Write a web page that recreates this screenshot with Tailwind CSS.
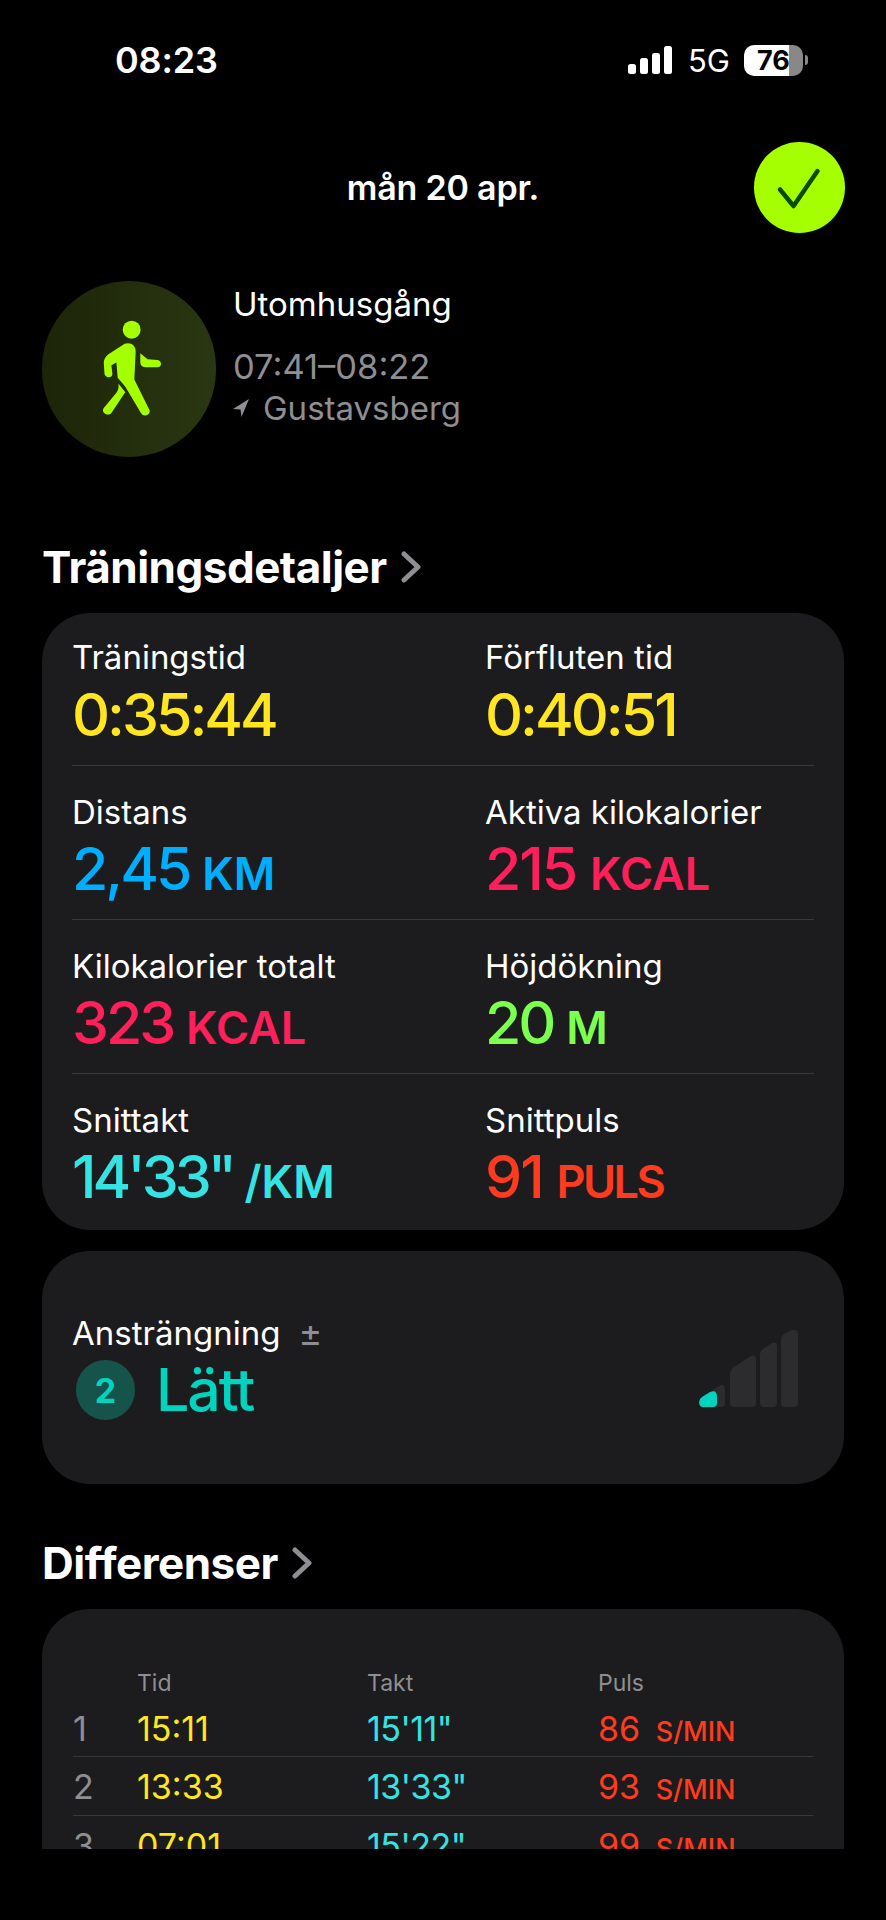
<!DOCTYPE html>
<html lang="sv">
<head>
  <meta charset="UTF-8">
  <meta name="viewport" content="width=device-width, initial-scale=1.0">
  <title>Träning</title>
  <script src="https://cdn.jsdelivr.net/npm/@tailwindcss/browser@4"></script>
</head>
<body class="bg-black text-white font-['Inter','Noto_Sans',sans-serif]">
<div class="w-[886px] h-[1920px] overflow-hidden">

  <!-- Status bar -->
  <div class="h-[120px] flex items-center pl-[115px] pr-[78px]">
    <span class="text-[36px] font-semibold tracking-[-0.2px]">08:23</span>
    <div class="ml-auto flex items-center">
      <svg width="44" height="28" viewBox="0 0 44 28" fill="#fff">
        <rect x="0" y="18" width="8" height="10" rx="2.5"/>
        <rect x="12" y="12" width="8" height="16" rx="2.5"/>
        <rect x="24" y="7" width="8" height="21" rx="2.5"/>
        <rect x="36" y="0" width="8" height="28" rx="2.5"/>
      </svg>
      <span class="ml-[16px] text-[31px] font-normal leading-none">5G</span>
      <div class="ml-[14px] w-[59px] h-[31px] rounded-[10px] bg-[linear-gradient(90deg,#fff_76%,#888_76%)] flex items-center justify-center text-black text-[27px] font-bold leading-none">76</div>
      <div class="ml-[2px] w-[3px] h-[10px] rounded-r-full bg-[#888]"></div>
    </div>
  </div>

  <!-- Date and close -->
  <div class="mt-[22px] pr-[41px] grid grid-cols-[1fr_auto_1fr] items-center">
    <div></div>
    <div class="text-[34px] font-semibold tracking-[-0.2px] pl-[41px]">mån 20 apr.</div>
    <div class="flex justify-end">
      <div class="w-[91px] h-[91px] rounded-full bg-[#a6ff00] flex items-center justify-center">
        <svg width="91" height="91" viewBox="0 0 91 91" fill="none" stroke="#0b4a00" stroke-width="4.5" stroke-linecap="round" stroke-linejoin="round">
          <path d="M26 47.5 39.5 64 63.5 29"/>
        </svg>
      </div>
    </div>
  </div>

  <!-- Workout -->
  <div class="mt-[48px] pl-[42px] flex">
    <div class="w-[174px] h-[176px] rounded-full bg-[linear-gradient(90deg,#1c2508,#2a3712)]">
      <svg width="174" height="176" viewBox="34 37 524 524" preserveAspectRatio="none" fill="#a4ff00">
        <circle cx="304" cy="182" r="27"/>
        <path d="M283 224C300 218 318 228 316 250L312 330 358 422C362 436 340 444 332 430L285 352 262 325 258 280 243 288 246 314C246 328 222 326 222 312L220 280C220 270 226 262 234 255Z"/>
        <path d="M264 342 285 368 280 375 243 430C232 442 210 428 220 415L258 370C264 362 266 350 264 342Z"/>
        <path d="M330 252 352 270 382 272C396 274 396 294 382 294L345 294C335 294 330 288 330 280Z"/>
      </svg>
    </div>
    <div class="ml-[17px]">
      <div class="h-[46px] leading-[46px] text-[33px]">Utomhusgång</div>
      <div class="mt-[20px] h-[40px] leading-[40px] text-[34.5px] text-[#8e8e93]">07:41–08:22</div>
      <div class="mt-[1px] h-[40px] leading-[40px] text-[33px] text-[#8e8e93] flex items-center">
        <svg width="16" height="18" viewBox="0 0 16 18" fill="#8e8e93" class="mr-[14px]"><path d="M16 0 0 10 7.5 10.5 8.5 18Z"/></svg>
        Gustavsberg
      </div>
    </div>
  </div>

  <!-- Träningsdetaljer -->
  <div class="mt-[85px] pl-[42px] h-[50px] flex items-center">
    <h2 class="text-[44px] font-bold tracking-[-0.5px]">Träningsdetaljer</h2>
    <svg width="22" height="32" viewBox="0 0 22 32" fill="none" stroke="#8e8e93" stroke-width="5" stroke-linecap="round" stroke-linejoin="round" class="ml-[13px]"><path d="M4 3 18 16 4 29"/></svg>
  </div>

  <div class="mt-[21px] mx-[42px] h-[617px] rounded-[48px] bg-[#1c1c1e] px-[30px]">
    <div class="h-[153px] border-b border-[#38383a] grid grid-cols-[413px_1fr]">
      <div class="pt-[26px]">
        <div class="h-[36px] leading-[36px] text-[33px]">Träningstid</div>
        <div class="mt-[10px] h-[60px] leading-[60px] text-[59px] font-medium tracking-[-3px] text-[#ffe620]">0:35:44</div>
      </div>
      <div class="pt-[26px]">
        <div class="h-[36px] leading-[36px] text-[33px]">Förfluten tid</div>
        <div class="mt-[10px] h-[60px] leading-[60px] text-[59px] font-medium tracking-[-3px] text-[#ffe620]">0:40:51</div>
      </div>
    </div>
    <div class="h-[154px] border-b border-[#38383a] grid grid-cols-[413px_1fr]">
      <div class="pt-[28px]">
        <div class="h-[36px] leading-[36px] text-[33px]">Distans</div>
        <div class="mt-[9px] h-[60px] leading-[60px] text-[59px] font-medium tracking-[-3px] text-[#00aeff]">2,45 <span class="text-[45px] font-semibold tracking-normal">KM</span></div>
      </div>
      <div class="pt-[28px]">
        <div class="h-[36px] leading-[36px] text-[33px]">Aktiva kilokalorier</div>
        <div class="mt-[9px] h-[60px] leading-[60px] text-[59px] font-medium tracking-[-2px] text-[#ff1f5a]">215 <span class="text-[45px] font-semibold tracking-normal">KCAL</span></div>
      </div>
    </div>
    <div class="h-[154px] border-b border-[#38383a] grid grid-cols-[413px_1fr]">
      <div class="pt-[28px]">
        <div class="h-[36px] leading-[36px] text-[33px]">Kilokalorier totalt</div>
        <div class="mt-[9px] h-[60px] leading-[60px] text-[59px] font-medium tracking-[-3px] text-[#ff1f5a]">323 <span class="text-[45px] font-semibold tracking-normal">KCAL</span></div>
      </div>
      <div class="pt-[28px]">
        <div class="h-[36px] leading-[36px] text-[33px]">Höjdökning</div>
        <div class="mt-[9px] h-[60px] leading-[60px] text-[59px] font-medium tracking-[-3px] text-[#7dff50]">20 <span class="text-[45px] font-semibold tracking-normal">M</span></div>
      </div>
    </div>
    <div class="grid grid-cols-[413px_1fr]">
      <div class="pt-[28px]">
        <div class="h-[36px] leading-[36px] text-[33px]">Snittakt</div>
        <div class="mt-[9px] h-[60px] leading-[60px] text-[59px] font-medium tracking-[-4px] text-[#35e3e3]">14'33" <span class="text-[45px] font-semibold tracking-normal">/KM</span></div>
      </div>
      <div class="pt-[28px]">
        <div class="h-[36px] leading-[36px] text-[33px]">Snittpuls</div>
        <div class="mt-[9px] h-[60px] leading-[60px] text-[59px] font-medium tracking-[-2px] text-[#ff3b1f]">91 <span class="text-[45px] font-semibold tracking-[-2.5px]">PULS</span></div>
      </div>
    </div>
  </div>

  <!-- Ansträngning -->
  <div class="mt-[21px] mx-[42px] h-[233px] rounded-[48px] bg-[#1c1c1e] px-[30px] pt-[64px] flex justify-between">
    <div>
      <div class="h-[36px] leading-[36px] text-[33px] flex items-center">Ansträngning <span class="ml-[18px] text-[36px] leading-none text-[#8e8e93]">±</span></div>
      <div class="mt-[9px] flex items-center">
        <div class="ml-[4px] w-[59px] h-[60px] rounded-full bg-[#15534b] flex items-center justify-center text-[34px] font-bold text-[#00d4bf]">2</div>
        <div class="ml-[21px] text-[59px] leading-[60px] font-medium tracking-[-2px] text-[#00d4bf]">Lätt</div>
      </div>
    </div>
    <svg width="100" height="78" viewBox="0 0 100 78" class="mr-[15px] mt-[15px]">
      <path d="M12 66Q12 60 17 58L20 56Q26 52 26 60V73Q26 77 22 77H12Z" fill="#2c2c2e"/>
      <path d="M31 43Q31 40 34 38L50 27Q57 23 57 30V73Q57 77 53 77H35Q31 77 31 73Z" fill="#2c2c2e"/>
      <path d="M61 24Q61 21 64 19L73 13Q78 11 78 17V73Q78 77 74 77H65Q61 77 61 73Z" fill="#2c2c2e"/>
      <path d="M82 9Q82 6 85 4L93 0Q99 -1 99 5V73Q99 77 95 77H86Q82 77 82 73Z" fill="#2c2c2e"/>
      <path d="M0 72Q0 69 3 67L11 62Q18 59 18 67V73Q18 77 14 77H4Q0 77 0 72Z" fill="#00d4bf"/>
    </svg>
  </div>

  <!-- Differenser -->
  <div class="mt-[54px] pl-[42px] h-[50px] flex items-center">
    <h2 class="text-[44px] font-bold tracking-[-0.5px]">Differenser</h2>
    <svg width="22" height="32" viewBox="0 0 22 32" fill="none" stroke="#8e8e93" stroke-width="5" stroke-linecap="round" stroke-linejoin="round" class="ml-[13px]"><path d="M4 3 18 16 4 29"/></svg>
  </div>

  <div class="mt-[21px] mx-[42px] h-[240px] rounded-t-[48px] bg-[#1c1c1e] overflow-hidden px-[31px] pt-[60px]">
    <div class="grid grid-cols-[64px_230px_231px_1fr] h-[28px] leading-[28px] text-[23px] text-[#8e8e93]">
      <div></div><div>Tid</div><div>Takt</div><div>Puls</div>
    </div>
    <div class="mt-[3px] h-[57px] border-b border-[#38383a] grid grid-cols-[64px_230px_231px_1fr] items-center text-[34px]">
      <div class="text-[#8e8e93]">1</div>
      <div class="text-[#ffe620]">15:11</div>
      <div class="text-[#35e3e3] tracking-[-0.5px]">15'11"</div>
      <div class="text-[#ff3b1f]">86 <span class="ml-[6px] text-[27px] font-medium">S/MIN</span></div>
    </div>
    <div class="h-[59px] border-b border-[#38383a] grid grid-cols-[64px_230px_231px_1fr] items-center text-[34px]">
      <div class="text-[#8e8e93]">2</div>
      <div class="text-[#ffe620]">13:33</div>
      <div class="text-[#35e3e3] tracking-[-0.5px]">13'33"</div>
      <div class="text-[#ff3b1f]">93 <span class="ml-[6px] text-[27px] font-medium">S/MIN</span></div>
    </div>
    <div class="h-[59px] grid grid-cols-[64px_230px_231px_1fr] items-center text-[34px]">
      <div class="text-[#8e8e93]">3</div>
      <div class="text-[#ffe620]">07:01</div>
      <div class="text-[#35e3e3] tracking-[-0.5px]">15'22"</div>
      <div class="text-[#ff3b1f]">99 <span class="ml-[6px] text-[27px] font-medium">S/MIN</span></div>
    </div>
  </div>

</div>
</body>
</html>
